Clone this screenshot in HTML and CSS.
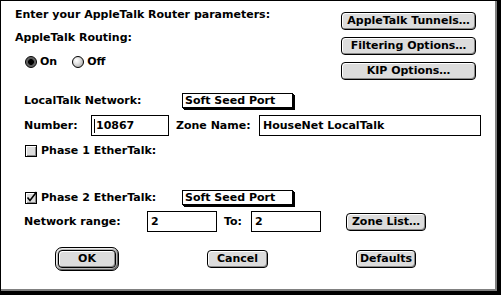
FILE: index.html
```html
<!DOCTYPE html>
<html>
<head>
<meta charset="utf-8">
<title>AppleTalk Router</title>
<link rel="stylesheet" href="styles.css">
</head>
<body>
<div class="dialog">
  <div class="top">
    <div class="top-left">
      <div class="title">Enter your AppleTalk Router parameters:</div>
      <div class="routing">AppleTalk Routing:</div>
      <div class="radios">
        <span class="radio on"></span><span class="rlabel">On</span>
        <span class="radio off"></span><span class="rlabel">Off</span>
      </div>
    </div>
    <div class="top-right">
      <div class="btn side">AppleTalk Tunnels…</div>
      <div class="btn side">Filtering Options…</div>
      <div class="btn side">KIP Options…</div>
    </div>
  </div>

  <div class="row row-local">
    <span class="lbl lbl-pop">LocalTalk Network:</span>
    <span class="popup">Soft Seed Port</span>
  </div>

  <div class="row row-number">
    <span class="lbl lbl-number">Number:</span>
    <span class="field f-number"><span class="caret"></span>10867</span>
    <span class="lbl lbl-zone">Zone Name:</span>
    <span class="field f-zone">HouseNet LocalTalk</span>
  </div>

  <div class="row row-phase1">
    <span class="check"></span>
    <span class="clabel">Phase 1 EtherTalk:</span>
  </div>

  <div class="row row-phase2">
    <span class="check checked"><svg width="13" height="13" viewBox="0 0 13 13"><path d="M2.5 6.5 L5 9.5 L11.5 1" fill="none" stroke="#000" stroke-width="1.6"/></svg></span>
    <span class="clabel lbl-pop2">Phase 2 EtherTalk:</span>
    <span class="popup">Soft Seed Port</span>
  </div>

  <div class="row row-range">
    <span class="lbl lbl-range">Network range:</span>
    <span class="field f-range">2</span>
    <span class="lbl lbl-to">To:</span>
    <span class="field f-range">2</span>
    <span class="btn zone-list">Zone List…</span>
  </div>

  <div class="row row-buttons">
    <span class="default-ring"><span class="btn ok">OK</span></span>
    <span class="btn cancel">Cancel</span>
    <span class="btn defaults">Defaults</span>
  </div>
</div>
</body>
</html>
```

FILE: styles.css
```css
* {
  box-sizing: border-box;
}

html,
body {
  margin: 0;
  padding: 0;
  background: #fff;
}

body {
  font-family: "DejaVu Sans", "Liberation Sans", sans-serif;
  font-weight: bold;
  font-size: 11px;
  line-height: 16px;
  color: #000;
}

.dialog {
  width: 501px;
  height: 295px;
  background: #fff;
  border-top: 1px solid #000;
  border-left: 1px solid #000;
  border-right: 4px solid #000;
  border-bottom: 4px solid #000;
  box-shadow: inset -2px -2px 0 #808080;
}

/* top section */
.top {
  display: flex;
  justify-content: space-between;
  align-items: flex-start;
}

.top-left {
  padding: 6px 0 0 14px;
}

.routing {
  margin-top: 7px;
}

.radios {
  margin-top: 8px;
  padding-left: 10px;
  height: 16px;
  display: flex;
  align-items: center;
}

.radio {
  width: 12px;
  height: 12px;
  border: 1px solid #000;
  border-radius: 50%;
  display: inline-block;
  background: radial-gradient(circle at 35% 35%, #fff 0, #e4e4e4 35%, #9a9a9a 100%);
}

.radio.on {
  background: radial-gradient(circle at 50% 50%, #000 0, #000 2.6px, #555 3.2px, #888 100%);
}

.radio.off {
  margin-left: 15px;
}

.rlabel {
  margin-left: 3px;
}

.top-right {
  margin-top: 11px;
  margin-right: 21px;
  display: flex;
  flex-direction: column;
  gap: 7px;
}

/* buttons */
.btn {
  display: inline-block;
  height: 18px;
  border: 1px solid #000;
  border-radius: 4px;
  background: #dcdcdc;
  box-shadow: inset 1px 1px 0 #fff, inset -1px -1px 0 #8a8a8a;
  text-align: center;
  line-height: 16px;
}

.btn.side {
  width: 135px;
}

/* rows */
.row {
  display: flex;
  align-items: center;
  padding-left: 23px;
}

.row-local {
  margin-top: 12px;
  height: 17px;
}

.lbl-pop {
  width: 158px;
}

.popup {
  width: 111px;
  height: 15px;
  border: 1px solid #000;
  box-shadow: 1px 1px 0 #000, 2px 2px 0 #000;
  padding-left: 2px;
  line-height: 13px;
  background: #fff;
}

.row-number {
  margin-top: 6px;
  height: 21px;
}

.lbl-number {
  width: 67px;
}

.field {
  height: 21px;
  border: 1px solid #000;
  background: #fff;
  line-height: 19px;
  padding-left: 3px;
  display: flex;
  align-items: center;
}

.f-number {
  width: 78px;
  padding-left: 2px;
}

.caret {
  width: 1px;
  height: 14px;
  background: #000;
  margin-right: 1px;
}

.lbl-zone {
  margin-left: 7px;
  width: 83px;
}

.f-zone {
  width: 222px;
}

.row-phase1 {
  margin-top: 7px;
  height: 16px;
  padding-left: 24px;
}

.check {
  width: 12px;
  height: 12px;
  border: 1px solid #000;
  background: #dcdcdc;
  box-shadow: inset 1px 1px 0 #fff, inset -1px -1px 0 #8a8a8a;
  position: relative;
  flex: none;
}

.check svg {
  position: absolute;
  left: -1px;
  top: -2px;
}

.clabel {
  margin-left: 4px;
}

.row-phase2 {
  margin-top: 30px;
  height: 17px;
  padding-left: 24px;
}

.lbl-pop2 {
  width: 141px;
}

.row-range {
  margin-top: 5px;
  height: 21px;
}

.lbl-range {
  width: 123px;
}

.f-range {
  width: 70px;
}

.lbl-to {
  margin-left: 7px;
  width: 27px;
}

.zone-list {
  width: 80px;
  margin-left: 25px;
}

.row-buttons {
  margin-top: 15px;
  height: 24px;
  padding-left: 54px;
}

.default-ring {
  width: 64px;
  height: 24px;
  padding: 2px;
  border: 1px solid #000;
  border-radius: 7px;
  background: #b8b8b8;
  box-shadow: inset 1px 1px 0 #eee, inset -1px -1px 0 #666;
  display: flex;
}

.btn.ok {
  width: 58px;
}

.btn.cancel {
  width: 61px;
  margin-left: 88px;
}

.btn.defaults {
  width: 60px;
  margin-left: 88px;
}
```
